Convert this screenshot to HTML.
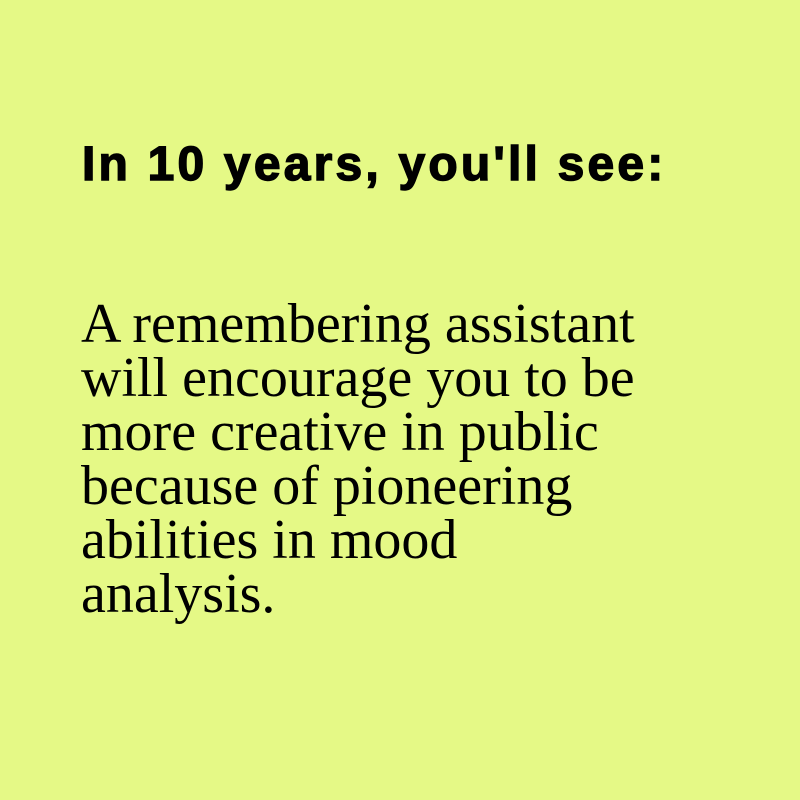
<!DOCTYPE html>
<html><head><style>
html,body{margin:0;padding:0;width:800px;height:800px;background:#e5f986;overflow:hidden}
h1{position:absolute;left:82px;top:0;margin:0;font:bold 48px/1 "Liberation Sans",sans-serif;letter-spacing:3.2px;color:#000;-webkit-text-stroke:1.4px #000;}
p{position:absolute;left:81px;top:0;margin:0;font:56px/54px "Liberation Serif",serif;color:#000;width:700px}
</style></head><body>
<h1 style="top:141px">In 10 years, you'll see:</h1>
<p style="top:297px">A remembering assistant<br>will encourage you to be<br>more creative in public<br>because of pioneering<br>abilities in mood<br>analysis.</p>
</body></html>
